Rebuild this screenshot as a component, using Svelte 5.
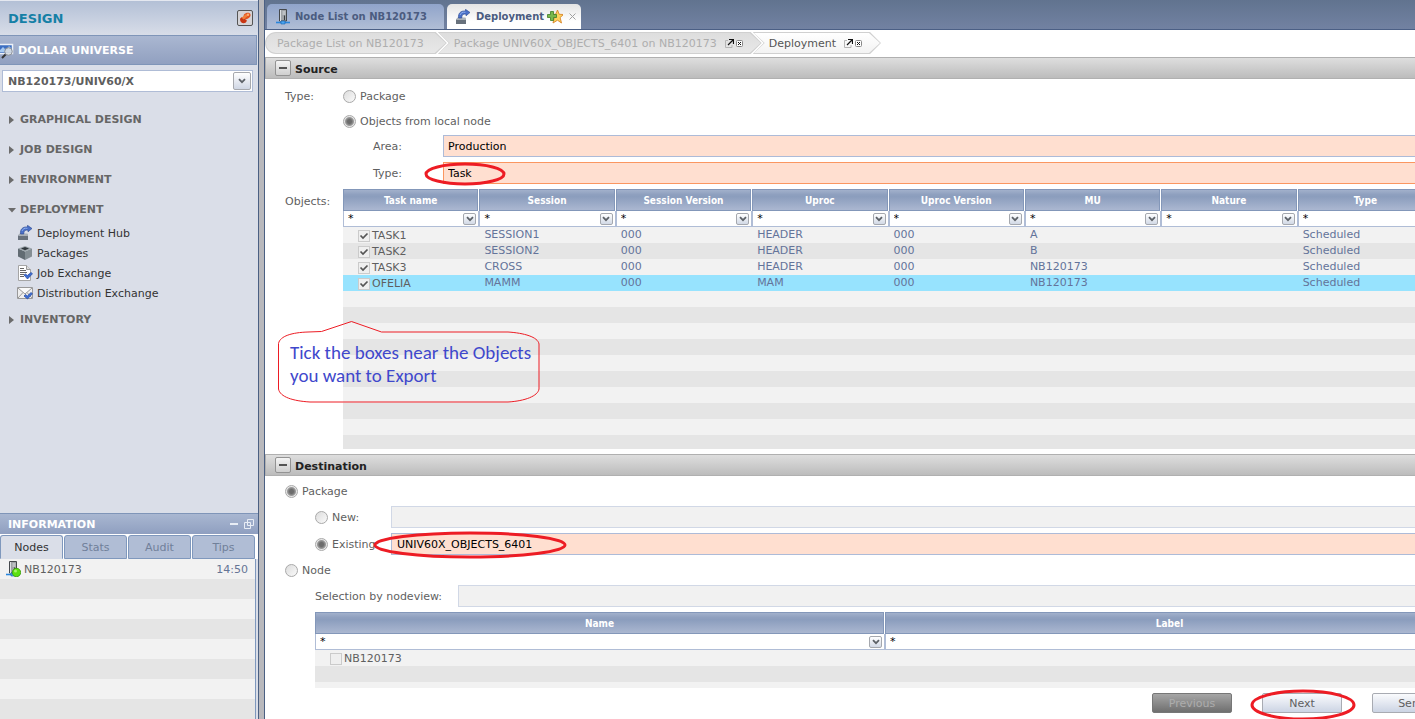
<script>
  const menu = [
    { name: 'GRAPHICAL DESIGN' },
    { name: 'JOB DESIGN' },
    { name: 'ENVIRONMENT' },
    {
      name: 'DEPLOYMENT',
      items: [
        { name: 'Deployment Hub', icon: 'hub' },
        { name: 'Packages', icon: 'box' },
        { name: 'Job Exchange', icon: 'job' },
        { name: 'Distribution Exchange', icon: 'mail' }
      ]
    },
    { name: 'INVENTORY' }
  ];
  const infoTabs = ['Nodes', 'Stats', 'Audit', 'Tips'];
  const crumbs = [
    { name: 'Package List on NB120173' },
    { name: 'Package UNIV60X_OBJECTS_6401 on NB120173', tools: true },
    { name: 'Deployment', tools: true, current: true }
  ];
  const columns = ['Task name', 'Session', 'Session Version', 'Uproc', 'Uproc Version', 'MU', 'Nature', 'Type'];
  const tasks = [
    ['TASK1', 'SESSION1', '000', 'HEADER', '000', 'A', '', 'Scheduled'],
    ['TASK2', 'SESSION2', '000', 'HEADER', '000', 'B', '', 'Scheduled'],
    ['TASK3', 'CROSS', '000', 'HEADER', '000', 'NB120173', '', 'Scheduled'],
    ['OFELIA', 'MAMM', '000', 'MAM', '000', 'NB120173', '', 'Scheduled']
  ];
  let origin = $state('objects');
  let target = $state('package');
  let packageMode = $state('existing');
</script>

{#snippet icon(kind)}
  <svg class="icon" viewBox="0 0 16 16" aria-hidden="true">
    {#if kind === 'hub'}
      <path d="M2 9.500h8.500l.5 1V15H1v-4.500z" fill="#68717c" />
      <path d="M2.500 8.500h8l.5 2.500H1z" fill="#a9b0b8" />
      <path d="M3.500 9C3 4.500 5.500 1.500 10.500 2V.3L15 3.500l-4 3.300V5.200C8 4.600 6.600 6 6.800 9z" fill="#4a70c8" stroke="#27458f" stroke-width=".6" />
      <path d="M5 6c.8-2.200 2.500-3 5.500-2.800" fill="none" stroke="#8fb0ee" />
    {:else if kind === 'box'}
      <path d="M1 3.500l7 3V15l-7-3.500z" fill="#626c73" />
      <path d="M8 6.500l7-3v8L8 15z" fill="#848e94" />
      <path d="M8 1l7 2.500-7 3-7-3z" fill="#9da6ac" />
      <path d="M8 1.900l4 1.600-4 1.700-4-1.700z" fill="#30383e" />
    {:else if kind === 'job'}
      <path d="M1.500.5h8l4 4v11h-12z" fill="#fff" stroke="#a5a5a5" />
      <path d="M9.500.5v4h4" fill="#ddd" stroke="#999" />
      <path d="M3 3.500h4M3 5.500h6M3 7.500h7M3 9.500h4M3 11.500h4" stroke="#666" />
      <path d="M7 10l1.500-1 1.800 1.500L14 7.500l1.500 1.200-5 5.300z" fill="#3f6fd4" stroke="#24489c" stroke-width=".7" />
    {:else if kind === 'mail'}
      <path d="M.5 2.500h15v11H.5z" fill="#eee" stroke="#999" />
      <path d="M1 3l7 6 7-6M1 13l5-5.500M15 13l-5-5.500" fill="#fafafa" stroke="#999" />
      <path d="M7 11l1.500-1.500 1.800 1.500L14 7.500l1.500 1.200-5 5.300z" fill="#3f6fd4" stroke="#24489c" stroke-width=".7" />
    {:else if kind === 'server' || kind === 'online'}
      <path d="M4.500.5h7V12h-7z" fill="#9ea2a6" stroke="#45494d" />
      <path d="M5.500 1v11M7.500 3h3M7.500 5h3" stroke="#dcdfe2" />
      <path d="M9.500 6.500V11" stroke="#393d42" />
      <path d="M1 13.500h14" stroke="#2a86dc" stroke-width="1.600" />
      <path d="M6 12h4v3H6z" fill="#4aa4f0" stroke="#1561ae" stroke-width=".6" />
      {#if kind === 'online'}
        <circle cx="11.500" cy="11.500" r="4.200" fill="#5ce010" stroke="#399a0a" stroke-width=".8" />
        <circle cx="10.500" cy="10" r="1.500" fill="#a8f56a" />
      {/if}
    {:else if kind === 'universe'}
      <path d="M.5 1.500h14v9H.5z" fill="#3d6fc2" stroke="#edf1f7" stroke-width="1.500" />
      <path d="M2 7l3-3 3 3 3-4 2 2v4H2z" fill="#a6c9f0" />
      <path d="M8 11l-4 4" stroke="#333" stroke-width="2" />
      <circle cx="10.500" cy="8.500" r="3.800" fill="#d4d9df" fill-opacity=".85" stroke="#8a8f97" />
    {:else if kind === 'favorite'}
      <path d="M10.500 1l1.700 4.300 4.300.2-3.400 3 1.400 5.500-4-2.800-4.500 2.800 1.200-5-3-3.300 4.500-.5z" fill="#fbd35c" stroke="#d8842a" stroke-width=".9" />
      <path d="M3.500 2.500h3v3h3v3h-3v3h-3v-3h-3v-3h3z" fill="#79b84c" stroke="#3e7c25" stroke-width=".8" />
    {/if}
  </svg>
{/snippet}

{#snippet arrow()}
  <svg class="chevron" viewBox="0 0 8 6" aria-hidden="true"><path d="M1 1.200l3 3 3-3" fill="none" stroke="#5d6268" stroke-width="1.800" /></svg>
{/snippet}

{#snippet filter(name)}
  <div class="filter">
    <input type="text" value="*" aria-label={'Filter ' + name} />
    <button type="button" aria-label={'Choose ' + name}>{@render arrow()}</button>
  </div>
{/snippet}

<div class="app">
  <aside>
    <header class="design">
      <h1>DESIGN</h1>
      <button type="button" aria-label="Switch workspace">
        <svg viewBox="0 0 14 14" aria-hidden="true">
          <path d="M6 3.500C8 1 12 1 12.500 3.500S10 8 8 8 5 5.500 6 3.500z" fill="#e2511e" />
          <path d="M2 8c1-2.500 3.500-2 4.500-.500s3 .5 2 3-6.500 2.500-6.500-2.500z" fill="#c93512" />
          <path d="M4.500 7.500L9 4" stroke="#f0803c" stroke-width="2.500" />
          <circle cx="10" cy="3.800" r="1.200" fill="#ffae70" />
        </svg>
      </button>
    </header>
    <div class="product">{@render icon('universe')}<h2>DOLLAR UNIVERSE</h2></div>
    <div class="company">
      <select aria-label="Node"><option>NB120173/UNIV60/X</option></select>
      <span class="drop">{@render arrow()}</span>
    </div>
    <nav>
      {#each menu as group}
        <button type="button" class="group" aria-expanded={!!group.items}>
          <svg viewBox="0 0 8 8" aria-hidden="true"><path d={group.items ? 'M0 2h8L4 6.500z' : 'M1 0l5 4-5 4z'} fill="#6c6c6c" /></svg>
          {group.name}
        </button>
        {#if group.items}
          <ul>
            {#each group.items as item}
              <li><a href="#{item.icon}">{@render icon(item.icon)}{item.name}</a></li>
            {/each}
          </ul>
        {/if}
      {/each}
    </nav>
    <section class="info">
      <header>
        <h2>INFORMATION</h2>
        <button type="button" aria-label="Minimize"><svg viewBox="0 0 10 10" aria-hidden="true"><path d="M1 5h8" stroke="#e8edf5" stroke-width="2" /></svg></button>
        <button type="button" aria-label="Restore"><svg viewBox="0 0 10 10" aria-hidden="true"><path d="M3.500.5h6v6h-6zM.5 3.500h6v6h-6z" fill="none" stroke="#e8edf5" /></svg></button>
      </header>
      <div class="info-tabs" role="tablist">
        {#each infoTabs as tab, i}
          <button type="button" role="tab" aria-selected={i === 0} class:active={i === 0}>{tab}</button>
        {/each}
      </div>
      <div class="nodes">
        <div class="node">{@render icon('online')}<span>NB120173</span><time>14:50</time></div>
      </div>
    </section>
  </aside>

  <main>
    <div class="tabs" role="tablist">
      <button type="button" role="tab" aria-selected="false" class="tab">{@render icon('server')}Node List on NB120173</button>
      <div class="tab active">
        <button type="button" role="tab" aria-selected="true">{@render icon('hub')}Deployment</button>
        {@render icon('favorite')}
        <button type="button" class="close" aria-label="Close tab"><svg viewBox="0 0 7 7" aria-hidden="true"><path d="M.5.5l6 6M6.500.5l-6 6" stroke="#a0a0a0" /></svg></button>
      </div>
    </div>

    <nav class="crumbs" aria-label="Breadcrumb">
      {#each crumbs as crumb}
        <div class="crumb" class:current={crumb.current}>
          <div class="crumb-body">
            <a href="#crumb">{crumb.name}</a>
            {#if crumb.tools}
              <button type="button" aria-label="Detach"><svg viewBox="0 0 9 9" aria-hidden="true"><path d="M3 1.500H.5v7H7V6" fill="none" stroke="#b5b5b5" /><path d="M3 6l5-5M4 .5h4.500V5" fill="none" stroke="#111" stroke-width="1.200" /></svg></button>
              <button type="button" aria-label="Close"><svg viewBox="0 0 9 9" aria-hidden="true"><rect x="1.500" y="1.500" width="6" height="6" rx="1" fill="#fff" stroke="#888" /><path d="M3 3l3 3M6 3L3 6" stroke="#111" /></svg></button>
            {/if}
          </div>
        </div>
      {/each}
    </nav>

    <div class="content">
      <div class="section-head">
        <button type="button" aria-label="Collapse source"><i></i></button>
        <h2>Source</h2>
      </div>
      <div class="source">
        <span>Type:</span>
        <label class="option"><input type="radio" value="package" bind:group={origin} />Package</label>
        <label class="option second"><input type="radio" value="objects" bind:group={origin} />Objects from local node</label>
        <div class="field area">
          <label for="area">Area:</label>
          <select id="area"><option>Production</option></select>
        </div>
        <div class="field area">
          <label for="type">Type:</label>
          <div class="marked">
            <select id="type" class="focused"><option>Task</option></select>
            <svg class="ring ring-type" viewBox="0 0 82 24" aria-hidden="true"><ellipse cx="41" cy="12" rx="39" ry="10" /></svg>
          </div>
        </div>
        <span class="objects-label">Objects:</span>
        <div class="grid objects">
          <table>
            <thead>
              <tr>{#each columns as column}<th>{column}</th>{/each}</tr>
              <tr class="filters">{#each columns as column}<td>{@render filter(column)}</td>{/each}</tr>
            </thead>
            <tbody>
              {#each tasks as task, i}
                <tr class:selected={i === 3}>
                  {#each task as value, c}
                    {#if c === 0}
                      <td class="first"><label><input type="checkbox" checked />{value}</label></td>
                    {:else}
                      <td>{value}</td>
                    {/if}
                  {/each}
                </tr>
              {/each}
            </tbody>
          </table>
          <div class="callout">
            <svg viewBox="0 0 262 82" aria-hidden="true"><path d="M.5 22.500C2 15 14 11.500 30 11L43.500 10.500 73.500.5l30 10.500H230C246 12 260 16 261 23v45c-1 7-14 12-31 13H32C15 80 2 76 .5 68z" fill="none" stroke="#ed1c24" /></svg>
            <p>Tick the boxes near the Objects<br />you want to Export</p>
          </div>
        </div>
      </div>

      <div class="section-head">
        <button type="button" aria-label="Collapse destination"><i></i></button>
        <h2>Destination</h2>
      </div>
      <div class="destination">
        <label class="option"><input type="radio" value="package" bind:group={target} />Package</label>
        <div class="field sub">
          <label class="option"><input type="radio" value="new" bind:group={packageMode} />New:</label>
          <input type="text" disabled aria-label="New package" />
        </div>
        <div class="field sub">
          <label class="option"><input type="radio" value="existing" bind:group={packageMode} />Existing:</label>
          <div class="marked">
            <select aria-label="Existing package"><option>UNIV60X_OBJECTS_6401</option></select>
            <svg class="ring ring-package" viewBox="0 0 194 28" aria-hidden="true"><ellipse cx="97" cy="14" rx="95" ry="12" /></svg>
          </div>
        </div>
        <label class="option"><input type="radio" value="node" bind:group={target} />Node</label>
        <div class="field view">
          <label for="nodeview">Selection by nodeview:</label>
          <input id="nodeview" type="text" disabled />
        </div>
        <div class="grid target">
          <table>
            <thead>
              <tr><th>Name</th><th>Label</th></tr>
              <tr class="filters"><td>{@render filter('Name')}</td><td>{@render filter('Label')}</td></tr>
            </thead>
            <tbody>
              <tr><td class="first"><label><input type="checkbox" disabled />NB120173</label></td><td></td></tr>
            </tbody>
          </table>
        </div>
      </div>
      <footer>
        <button type="button" disabled>Previous</button>
        <div class="marked">
          <button type="button">Next</button>
          <svg class="ring ring-next" viewBox="0 0 106 32" aria-hidden="true"><ellipse cx="53" cy="16" rx="51" ry="14" /></svg>
        </div>
        <button type="button">Send</button>
      </footer>
    </div>
  </main>
</div>

<style>
  :global(body) { overflow: hidden; }
  * { box-sizing: border-box; }
  .app {
    display: flex;
    height: 100vh;
    overflow: hidden;
    font: 11px/17px Verdana, 'DejaVu Sans', sans-serif;
    color: #5f5f5f;
    background: #fff;
  }
  h1, h2, p, ul { margin: 0; padding: 0; list-style: none; font-size: inherit; }
  button, input, select { font: inherit; color: inherit; margin: 0; padding: 0; }
  button { background: none; border: 0; }
  select { appearance: none; border-radius: 0; outline: 0; }
  a { color: inherit; text-decoration: none; }
  .icon { width: 16px; height: 16px; flex: none; }
  .chevron { width: 8px; height: 6px; }

  aside {
    display: flex;
    flex-direction: column;
    flex: none;
    width: 265px;
    background: #dadee8;
    border-right: 1px solid #4b6083;
    box-shadow: inset -5px 0 #b9b9bd, inset -6px 0 #4b6083;
    padding-right: 6px;
  }
  .design {
    display: flex;
    align-items: center;
    justify-content: space-between;
    height: 35px;
    padding: 0 5px 0 8px;
    background: linear-gradient(#b3c0d6, #d8dde8);
    border-top: 1px solid #e4e8f0;
  }
  h1 { font-size: 13px; color: #1580a6; }
  .design button { width: 16px; height: 16px; border: 1px solid #555; border-radius: 2px; background: #d5d3d6; line-height: 0; }
  .product {
    display: flex;
    align-items: center;
    gap: 4px;
    height: 30px;
    margin-right: 1px;
    padding-top: 1px;
    background: linear-gradient(#aab7d1, #91a0c0);
    border: 1px solid #7f95b8;
    border-left: 0;
    color: #fff;
  }
  .product .icon { margin-left: -2px; }
  .company { display: grid; align-items: center; margin: 5px 5px 17px 2px; }
  .company select {
    grid-area: 1 / 1;
    width: 100%;
    height: 22px;
    padding: 1px 5px 0;
    border: 1px solid #afbcd6;
    background: #fff;
    font-weight: bold;
  }
  .drop {
    grid-area: 1 / 1;
    justify-self: end;
    display: grid;
    place-items: center;
    width: 18px;
    height: 18px;
    margin-right: 2px;
    border: 1px solid #a6a8ad;
    border-radius: 2px;
    background: linear-gradient(#fff, #cfd6e4);
    pointer-events: none;
  }
  nav .group {
    display: flex;
    align-items: center;
    gap: 4px;
    height: 20px;
    margin-bottom: 10px;
    padding: 1px 0 0 8px;
    font-weight: bold;
    color: #666;
  }
  .group svg { width: 8px; height: 8px; }
  nav ul { margin: -6px 0 6px; padding-left: 17px; }
  nav li a { display: flex; align-items: center; gap: 4px; height: 20px; color: #333; }
  .info { margin-top: auto; }
  .info header {
    display: flex;
    align-items: center;
    gap: 5px;
    height: 21px;
    padding: 0 4px 0 8px;
    background: linear-gradient(#a9b7d1, #8f9fc0);
    border-top: 1px solid #7f95b8;
    color: #fff;
  }
  .info header h2 { flex: 1; padding-top: 1px; }
  .info header button { width: 10px; height: 10px; line-height: 0; }
  .info-tabs { display: grid; grid-template-columns: repeat(4, 1fr); gap: 1px; height: 25px; padding: 1px 3px 0 0; background: #fff; }
  .info-tabs button { background: #b0bdd5; border: 1px solid #7f98bd; border-radius: 3px 3px 0 0; color: #70809a; }
  .info-tabs .active { background: #dadee8; border-bottom-color: #dadee8; color: #333; }
  .nodes {
    height: 160px;
    margin-right: 2px;
    border-right: 1px solid #7f98bd;
    background: repeating-linear-gradient(#f2f2f2 0 20px, #e5e5e5 20px 40px);
  }
  .node { display: flex; align-items: center; gap: 3px; height: 20px; padding: 0 7px 0 5px; }
  .node span { flex: 1; }
  .node time { color: #657595; }

  main { flex: 1; min-width: 0; display: flex; flex-direction: column; overflow: hidden; }
  .tabs {
    display: flex;
    align-items: flex-end;
    gap: 3px;
    height: 30px;
    padding-left: 2px;
    background: linear-gradient(#61738f, #7282a2);
    border-bottom: 1px solid #4b5f85;
    font-size: 10px;
    font-weight: bold;
    color: #4b5c80;
  }
  .tab {
    display: flex;
    align-items: center;
    gap: 4px;
    height: 25px;
    padding: 0 17px 0 8px;
    border-radius: 5px 5px 0 0;
    background: linear-gradient(#90a4ca, #b1bed6);
  }
  .tab.active { gap: 3px; padding: 0 5px 0 8px; background: linear-gradient(#e4e4e4, #fff 70%); }
  .tab button { display: flex; align-items: center; gap: 5px; }
  .tab .close { margin-left: 3px; }
  .close svg { width: 7px; height: 7px; }

  .crumbs { display: flex; height: 22px; margin: 2px 0 3px; }
  .crumb {
    flex: none;
    padding: 1px;
    background: #d0d0d0;
    clip-path: polygon(0 0, calc(100% - 11px) 0, 100% 50%, calc(100% - 11px) 100%, 0 100%, 11px 50%);
  }
  .crumb-body {
    display: flex;
    align-items: center;
    gap: 8px;
    height: 20px;
    padding: 1px 17px 0 15px;
    background: linear-gradient(#dedede, #e8e8e8);
    color: #aeaeae;
    clip-path: polygon(0 0, calc(100% - 11px) 0, 100% 50%, calc(100% - 11px) 100%, 0 100%, 11px 50%);
  }
  .crumb:first-child, .crumb:first-child .crumb-body {
    border-radius: 11px 0 0 11px;
    clip-path: polygon(0 0, calc(100% - 11px) 0, 100% 50%, calc(100% - 11px) 100%, 0 100%);
  }
  .crumb:first-child .crumb-body { padding: 1px 22px 0 11px; }
  .crumb + .crumb { margin-left: -9px; }
  .crumb.current .crumb-body { background: linear-gradient(#fff, #f3f3f3); color: #555; }
  .crumb button { width: 9px; height: 9px; line-height: 0; }
  .crumb button + button { margin-left: -7px; }

  .content { flex: 1; min-height: 0; display: flex; flex-direction: column; width: calc(100% + 40px); }
  .section-head {
    display: flex;
    align-items: center;
    gap: 4px;
    flex: none;
    height: 22px;
    padding-left: 9px;
    border: 1px solid #b0b0b0;
    background: linear-gradient(#dedede, #bcbcbc);
    color: #222;
  }
  .section-head h2 { padding-top: 2px; }
  .section-head button {
    display: grid;
    place-items: center;
    width: 16px;
    height: 16px;
    border: 1px solid #939393;
    border-radius: 2px;
    background: linear-gradient(#f4f4f4, #cfcfcf);
  }
  .section-head i { width: 8px; height: 2px; background: #555; }
  .source {
    flex: 1;
    min-height: 0;
    display: grid;
    grid-template-columns: 58px minmax(0, 1fr);
    grid-template-rows: 25px 26px 27px 27px minmax(0, 1fr);
    align-items: center;
    padding: 5px 0 5px 20px;
  }
  .second, .area, .grid.objects { grid-column: 2; }
  .option { display: flex; align-items: center; gap: 4px; height: 25px; }
  .option input {
    appearance: none;
    width: 13px;
    height: 13px;
    border: 1px solid #a9a9a9;
    border-radius: 50%;
    background: linear-gradient(135deg, #dcdcdc, #fafafa);
  }
  .option input:checked { background: radial-gradient(circle, #6c6c6c 0 2px, #9a9a9a 4px, #e6e6e6 5px); }
  .second { align-self: start; }
  .field { display: grid; align-items: center; height: 22px; align-self: start; }
  .field .option { height: 22px; }
  .area { grid-template-columns: 70px minmax(0, 1fr); padding-left: 30px; }
  .field label { padding-top: 1px; }
  .field select, .field > input {
    width: 100%;
    height: 22px;
    padding: 1px 4px 0;
    border: 1px solid #adbbd8;
    background: #ffdfd0;
    color: #000;
  }
  .field select.focused { border-color: #fb9660; }
  .field > input:disabled { background: #f1f1f1; border-color: #d1d8e6; }
  .marked { position: relative; display: grid; }
  .ring { position: absolute; fill: none; stroke: #ed1c24; stroke-width: 3; pointer-events: none; overflow: visible; }
  .ring-type { left: -19px; top: 0; width: 82px; height: 24px; }
  .ring-package { left: -18px; top: -2px; width: 194px; height: 28px; }
  .ring-next { left: -12px; top: -4px; width: 106px; height: 32px; }
  .objects-label { align-self: start; padding-top: 4px; }

  .grid { background: repeating-linear-gradient(#f2f2f2 0 16px, #e5e5e5 16px 32px); position: relative; }
  .grid.objects { height: 100%; padding-right: 21px; background-position: 0 38px; }
  .grid.target { height: 76px; margin-left: 30px; background-position: 0 6px; }
  table { width: 100%; table-layout: fixed; border-collapse: separate; border-spacing: 0; }
  th, td { padding: 0; text-align: left; font-weight: normal; overflow: hidden; white-space: nowrap; }
  th {
    height: 22px;
    padding-top: 2px;
    text-align: center;
    font: bold 10px/20px 'DejaVu Sans Condensed', 'DejaVu Sans', sans-serif;
    color: #fff;
    background: linear-gradient(#a6b4ce, #8fa0bf 25%, #8b9dbd 35%, #adb9d2);
    border-right: 1px solid #fff;
    box-shadow: inset 0 0 0 1px #8397b9;
  }
  .filters td { height: 16px; padding: 0; background: #fff; border: 1px solid #b0bdd6; border-width: 0 1px 1px; }
  .filter { display: flex; align-items: center; height: 15px; padding: 0 2px 0 4px; }
  .filter input { flex: 1; min-width: 0; width: 0; height: 15px; border: 0; background: none; color: #000; line-height: 15px; }
  .filter button {
    display: grid;
    place-items: center;
    width: 13px;
    height: 12px;
    border: 1px solid #a5a8ae;
    border-radius: 2px;
    background: linear-gradient(#fff, #d2d9e6);
  }
  tbody td { height: 16px; padding-left: 5px; line-height: 16px; color: #64749a; }
  tbody .first { padding-left: 15px; color: #5f5f5f; }
  .first label { display: flex; align-items: center; gap: 2px; height: 16px; padding-top: 1px; line-height: 17px; }
  .first input {
    appearance: none;
    width: 12px;
    height: 12px;
    border: 1px solid #cbcbcb;
    background: #efefef;
  }
  .first input:checked { background: #efefef url("data:image/svg+xml,%3Csvg xmlns='http://www.w3.org/2000/svg' viewBox='0 0 10 10'%3E%3Cpath d='M1.500 4.500l2.500 2.500 4.500-4.500' fill='none' stroke='%23555' stroke-width='1.700'/%3E%3C/svg%3E") center / 10px 10px; }
  .selected td { background: #97e3fe; }
  .callout { position: absolute; left: -65px; top: 132px; width: 262px; height: 82px; }
  .callout svg { position: absolute; inset: 0; }
  .callout p { padding: 20px 0 0 12px; font: 19px/23px Carlito, Lato, sans-serif; color: #3f48cc; white-space: nowrap; }

  .destination { padding: 3px 0 5px 20px; }
  .destination > .option { width: max-content; }
  .field.sub { grid-template-columns: 76px minmax(0, 1fr); margin: 2px 0 5px; padding-left: 30px; }
  .field.sub select { padding-left: 5px; }
  .field.sub + .field.sub { margin: 0 0 3px; }
  .field.view { grid-template-columns: 143px minmax(0, 1fr); margin: 2px 0 5px; padding-left: 30px; }
  footer { display: flex; justify-content: flex-end; gap: 30px; flex: none; padding: 0 3px 6px 0; }
  footer button {
    width: 80px;
    height: 20px;
    padding-top: 1px;
    border: 1px solid #a8abb2;
    border-radius: 2px;
    background: linear-gradient(#fafbfd, #ccd4e4);
  }
  footer button:disabled { border-color: #777; background: linear-gradient(#a6a6a6, #6f6f6f); color: #adadad; }
</style>
